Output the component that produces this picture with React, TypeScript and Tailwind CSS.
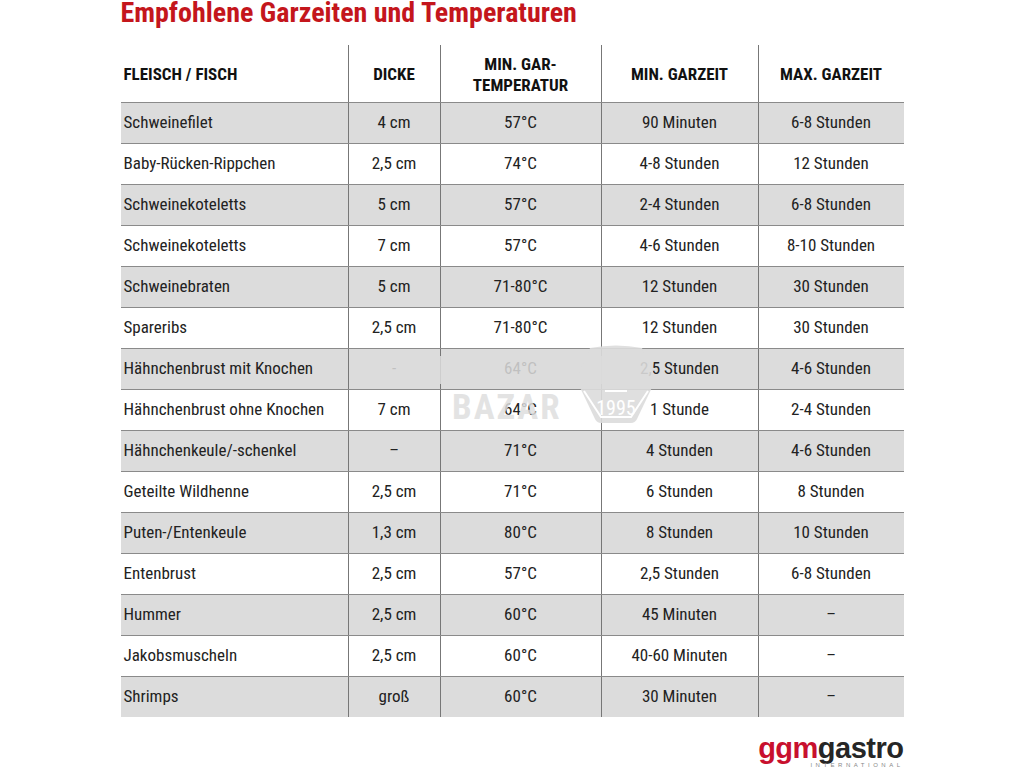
// Empfohlene Garzeiten — static table screenshot recreation.

const ROWS: [string, string, string, string, string][] = [
  ['Schweinefilet', '4 cm', '57°C', '90 Minuten', '6-8 Stunden'],
  ['Baby-Rücken-Rippchen', '2,5 cm', '74°C', '4-8 Stunden', '12 Stunden'],
  ['Schweinekoteletts', '5 cm', '57°C', '2-4 Stunden', '6-8 Stunden'],
  ['Schweinekoteletts', '7 cm', '57°C', '4-6 Stunden', '8-10 Stunden'],
  ['Schweinebraten', '5 cm', '71-80°C', '12 Stunden', '30 Stunden'],
  ['Spareribs', '2,5 cm', '71-80°C', '12 Stunden', '30 Stunden'],
  ['Hähnchenbrust mit Knochen', '-', '64°C', '2,5 Stunden', '4-6 Stunden'],
  ['Hähnchenbrust ohne Knochen', '7 cm', '64°C', '1 Stunde', '2-4 Stunden'],
  ['Hähnchenkeule/-schenkel', '–', '71°C', '4 Stunden', '4-6 Stunden'],
  ['Geteilte Wildhenne', '2,5 cm', '71°C', '6 Stunden', '8 Stunden'],
  ['Puten-/Entenkeule', '1,3 cm', '80°C', '8 Stunden', '10 Stunden'],
  ['Entenbrust', '2,5 cm', '57°C', '2,5 Stunden', '6-8 Stunden'],
  ['Hummer', '2,5 cm', '60°C', '45 Minuten', '–'],
  ['Jakobsmuscheln', '2,5 cm', '60°C', '40-60 Minuten', '–'],
  ['Shrimps', 'groß', '60°C', '30 Minuten', '–'],
]

const COLS = 'grid grid-cols-[227px_92px_161px_157px_146px]'
const FONT = "font-['Roboto_Condensed','Liberation_Sans_Narrow','DejaVu_Sans_Condensed',Roboto,sans-serif] font-stretch-condensed"

// Faint "BAZAR 1995" stamp that sits over the middle of the table
function Watermark() {
  return (
    <div className="absolute left-[330px] top-[345px] w-[340px] h-[84px] pointer-events-none">
      {/* grey smear that wipes most of the row text */}
      <div className="absolute left-[30px] top-[11px] w-[265px] h-[28px] bg-[#dcdcdc]/85" />
      <div className="absolute left-[122px] top-[45px] text-[35px] font-bold tracking-[2px] text-[#dedede]/85 font-['Roboto',sans-serif] leading-none">
        BAZAR
      </div>
      <svg className="absolute left-[244px] top-0" width="84" height="82" viewBox="0 0 84 82">
        <path
          d="M16 3 Q42 -2 68 3 Q76 20 82 34 L63 74 Q61 78 57 78 L27 78 Q23 78 21 74 L2 34 Q8 20 16 3 Z"
          fill="#dcdcdc"
          fillOpacity="0.9"
        />
        <path d="M10 46 L27 72 L57 72 L74 46" fill="none" stroke="#fff" strokeWidth="2" />
        <path d="M31 46 L53 46" stroke="#fff" strokeWidth="2" />
        <text x="42" y="70" textAnchor="middle" fontSize="20" fill="#fff" fontFamily="Roboto, sans-serif">
          1995
        </text>
      </svg>
    </div>
  )
}

export default function App() {
  return (
    <div className={`relative w-[1024px] h-[768px] bg-white overflow-hidden ${FONT}`}>
      <div className="w-[783px] mx-auto">
        {/* Title */}
        <h1 className="h-[45px] text-[28px] font-bold leading-[26px] text-[#c4161c]">
          Empfohlene Garzeiten und Temperaturen
        </h1>

        {/* Header */}
        <div className={`${COLS} h-[57px] text-[17px] font-bold text-[#111] leading-[21px]`}>
          <div className="flex items-center pl-[3px] pt-[2px]">FLEISCH / FISCH</div>
          <div className="flex items-center justify-center pt-[2px] border-l border-[#777]">DICKE</div>
          <div className="flex items-center justify-center text-center pt-[2px] border-l border-[#777]">
            MIN. GAR-
            <br />
            TEMPERATUR
          </div>
          <div className="flex items-center justify-center pt-[2px] border-l border-[#777]">MIN. GARZEIT</div>
          <div className="flex items-center justify-center pt-[2px] border-l border-[#777]">MAX. GARZEIT</div>
        </div>

        {/* Body */}
        {ROWS.map((row, i) => (
          <div
            key={i}
            className={`${COLS} h-[41px] border-t border-[#8a8a8a] text-[17px] text-[#222] ${
              i % 2 === 0 ? 'bg-[#dcdcdc]' : 'bg-white'
            }`}
          >
            <div className="flex items-center pl-[3px] whitespace-nowrap">{row[0]}</div>
            {row.slice(1).map((cell, j) => (
              <div key={j} className="flex items-center justify-center border-l border-[#777]">
                {cell}
              </div>
            ))}
          </div>
        ))}

        {/* Logo */}
        <div className="flex flex-col items-end mt-[18px]">
          <div className="text-[29px] font-bold leading-[26px] tracking-[-0.5px] font-['Liberation_Sans',Arial,sans-serif] font-stretch-normal">
            <span className="text-[#c8102e]">ggm</span>
            <span className="text-[#262626]">gastro</span>
          </div>
          <div className="text-[6px] tracking-[3.5px] text-[#888] leading-none mt-[1px] font-['Liberation_Sans',sans-serif] font-stretch-normal">
            INTERNATIONAL
          </div>
        </div>
      </div>
      <Watermark />
    </div>
  )
}
